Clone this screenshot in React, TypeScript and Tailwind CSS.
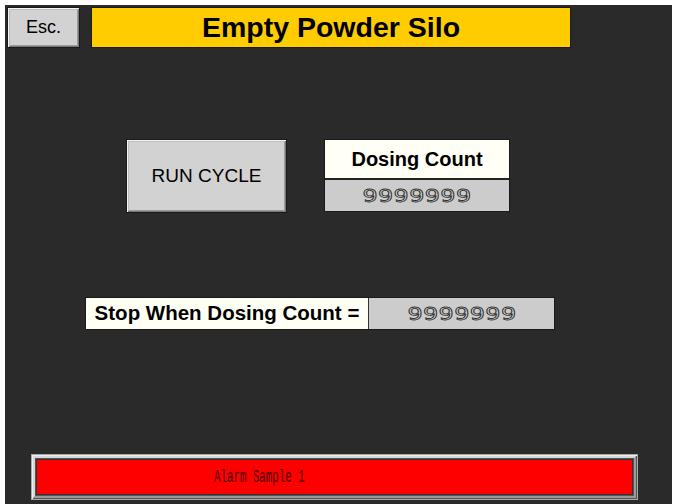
const sans = "font-['Liberation_Sans',Arial,sans-serif]";

function BevelButton({ className, children }: { className: string; children: React.ReactNode }) {
  return (
    <div
      className={`flex items-center justify-center border border-[#1a1a1a] bg-[#d2d2d2] shadow-[inset_1px_1px_0_#f4f4f4,inset_-1px_-1px_0_#7a7a7a,inset_2px_2px_0_#bdbdbd,inset_-2px_-2px_0_#9a9a9a] text-black ${sans} ${className}`}
    >
      {children}
    </div>
  );
}

function Digits({ value }: { value: string }) {
  return (
    <span className="inline-block scale-x-[1.4] font-['DejaVu_Sans_Mono',monospace] text-[18px] tracking-[0.3px] text-[#d6d6d6] [-webkit-text-stroke:0.8px_#2e2e2e]">
      {value}
    </span>
  );
}

export default function App() {
  return (
    <div className="h-[504px] w-[675px] bg-white pl-[5px] pt-[5px]">
      <div className="flex h-[499px] w-[667px] flex-col bg-[#2a2a2a] px-[2px] pt-[2px] pb-[4px]">
        {/* header */}
        <div className="flex items-start gap-[11px]">
          <BevelButton className="h-[41px] w-[73px] text-[18px]">Esc.</BevelButton>
          <div
            className={`flex h-[41px] w-[480px] items-center justify-center border border-[#1a1a1a] bg-[#ffcc00] text-[28.5px] font-bold text-black ${sans}`}
          >
            Empty Powder Silo
          </div>
        </div>

        {/* run cycle + counter */}
        <div className="mt-[91px] flex items-start gap-[37px] pl-[119px]">
          <BevelButton className="h-[74px] w-[161px] text-[19px]">RUN CYCLE</BevelButton>
          <div className="flex w-[186px] flex-col border border-[#1a1a1a]">
            <div
              className={`flex h-[40px] items-center justify-center border-b-2 border-[#222] bg-[#fffff6] text-[20px] font-bold text-black ${sans}`}
            >
              Dosing Count
            </div>
            <div className="flex h-[31px] items-center justify-center bg-[#cccccc]">
              <Digits value="9999999" />
            </div>
          </div>
        </div>

        {/* stop condition */}
        <div className="mt-[84px] flex pl-[78px]">
          <div className="flex h-[33px] border border-[#1a1a1a]">
            <div
              className={`flex w-[283px] items-center justify-center border-r border-[#333] bg-[#fffff6] text-[20.5px] font-bold text-black ${sans}`}
            >
              Stop When Dosing Count =
            </div>
            <div className="flex w-[185px] items-center justify-center bg-[#cccccc]">
              <Digits value="9999999" />
            </div>
          </div>
        </div>

        {/* alarm banner */}
        <div className="mt-auto ml-[24px] w-[607px] border border-[#aaa] bg-[#555] p-[1px] shadow-[inset_1px_1px_0_#eee]">
          <div className="border-2 border-t-[#d8d8d8] border-l-[#d8d8d8] border-r-[#9a9a9a] border-b-[#9a9a9a] p-[1px]">
            <div className="flex h-[36px] items-center border border-[#333] bg-[#ff0000] pl-[177px]">
              <span className="inline-block origin-left scale-x-[0.6] font-['Liberation_Mono',monospace] text-[18px] text-[#400]">
                Alarm Sample 1
              </span>
            </div>
          </div>
        </div>
      </div>
    </div>
  );
}
